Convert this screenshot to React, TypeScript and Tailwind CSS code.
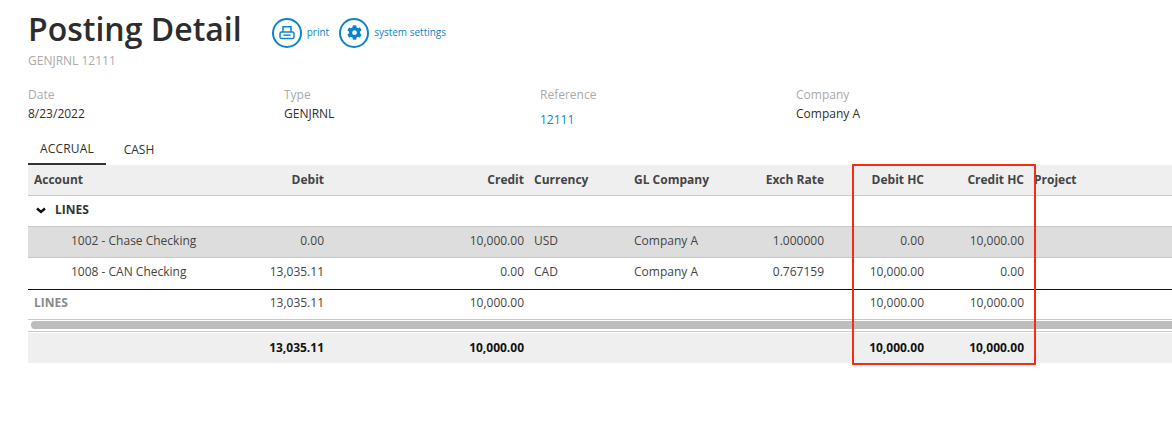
import { FaCog } from 'react-icons/fa'

const gridCols = 'grid grid-cols-[202px_100px_200px_100px_100px_100px_100px_100px_1fr]'

const headers = [
  { label: 'Account', className: 'pl-1.5' },
  { label: 'Debit', className: 'pr-1.5 text-right' },
  { label: 'Credit', className: 'pr-1.5 text-right' },
  { label: 'Currency', className: 'pl-1' },
  { label: 'GL Company', className: 'pl-1' },
  { label: 'Exch Rate', className: 'pr-1.5 text-right' },
  { label: 'Debit HC', className: 'pr-1.5 text-right' },
  { label: 'Credit HC', className: 'pr-1.5 text-right' },
  { label: 'Project', className: 'pl-1' },
]

// values start at the Debit column, the account cell is rendered by each row
function Cells({ values }: { values: string[] }) {
  return (
    <>
      {values.map((value, i) => (
        <div key={i} className={`whitespace-nowrap ${headers[i + 1].className}`}>
          {value}
        </div>
      ))}
    </>
  )
}

function Meta({ label, value, link }: { label: string; value: string; link?: boolean }) {
  return (
    <div className="w-[256px]">
      <div className="text-[12px] leading-[18px] text-[#aaaaaa]">{label}</div>
      <div className={`text-[12px] leading-[18px] ${link ? 'mt-[7px] text-[#0f83c9]' : 'mt-[1px] text-[#2f2f2f]'}`}>
        {value}
      </div>
    </div>
  )
}

export default function App() {
  return (
    <div className="w-[1172px] h-[430px] overflow-hidden bg-white pl-[28px] font-['Open_Sans',sans-serif] text-[12px] text-[#444444]">
      <div className="flex items-center h-[40px] mt-[9px]">
        <h1 className="text-[32px] leading-[40px] font-semibold text-[#2d2d2d]">Posting Detail</h1>
        <div className="flex items-center ml-[30px] mt-[7px] text-[10px] text-[#0f83c9]">
          <span className="flex items-center justify-center w-[30px] h-[30px] rounded-full border-2 border-[#0f83c9]">
            <svg width="16" height="15" viewBox="0 0 16 15" fill="none" stroke="#0f83c9" strokeWidth="1.5">
              <path d="M4 7V1.8h8V7" />
              <rect x="1" y="7" width="14" height="6.5" rx="1.6" />
              <path d="M4.5 10.2h7" />
            </svg>
          </span>
          <span className="ml-[5px]">print</span>
          <span className="flex items-center justify-center w-[30px] h-[30px] rounded-full border-2 border-[#0f83c9] ml-[10px]">
            <FaCog className="w-[15px] h-[15px]" />
          </span>
          <span className="ml-[5px]">system settings</span>
        </div>
      </div>
      <div className="text-[12px] leading-[18px] mt-[3px] text-[#aaaaaa]">GENJRNL 12111</div>

      <div className="flex mt-[16px] h-[41px]">
        <Meta label="Date" value="8/23/2022" />
        <Meta label="Type" value="GENJRNL" />
        <Meta label="Reference" value="12111" link />
        <Meta label="Company" value="Company A" />
      </div>

      <div className="flex mt-[14px] h-[24px] text-[12px] text-[#2f2f2f]">
        <div className="w-[78px] h-[24px] text-center border-b-2 border-[#333333] leading-[16px] tracking-[0.2px]">ACCRUAL</div>
        <div className="w-[66px] text-center leading-[18px]">CASH</div>
      </div>

      <div className="relative w-[1144px]">
        <div className={`${gridCols} items-center h-[31px] bg-[#efefef] border-b border-[#c8c8c8] font-bold text-[#444444]`}>
          {headers.map((h) => (
            <div key={h.label} className={`whitespace-nowrap ${h.className}`}>
              {h.label}
            </div>
          ))}
        </div>

        <div className="flex items-center h-[31px] pl-[8px] pb-[2px] border-b border-[#c8c8c8] font-bold text-[#333333]">
          <svg width="10" height="7" viewBox="0 0 10 7" fill="none" stroke="#111111" strokeWidth="2.4">
            <path d="M1 1.5l4 3.5 4-3.5" />
          </svg>
          <span className="ml-[9px]">LINES</span>
        </div>

        <div className={`${gridCols} items-center h-[31px] pb-[2px] bg-[#dddddd] border-b border-[#c8c8c8]`}>
          <div className="pl-[43px] whitespace-nowrap">1002 - Chase Checking</div>
          <Cells values={['0.00', '10,000.00', 'USD', 'Company A', '1.000000', '0.00', '10,000.00', '']} />
        </div>

        <div className={`${gridCols} items-center h-[32px] pb-[3px] border-b border-[#111111]`}>
          <div className="pl-[43px] whitespace-nowrap">1008 - CAN Checking</div>
          <Cells values={['13,035.11', '0.00', 'CAD', 'Company A', '0.767159', '10,000.00', '0.00', '']} />
        </div>

        <div className={`${gridCols} items-center h-[30px] pb-[4px] border-b border-[#c8c8c8]`}>
          <div className="pl-1.5 font-bold text-[#8a8a8a]">LINES</div>
          <Cells values={['13,035.11', '10,000.00', '', '', '', '10,000.00', '10,000.00', '']} />
        </div>

        <div className="h-[12px] pl-[3px] pt-[1px] border-b border-[#c8c8c8]">
          <div className="h-[8px] rounded-l-full bg-[#bdbdbd]" />
        </div>

        <div className={`${gridCols} items-center h-[30px] mt-[1px] bg-[#efefef] font-bold text-[#111111]`}>
          <div />
          <Cells values={['13,035.11', '10,000.00', '', '', '', '10,000.00', '10,000.00', '']} />
        </div>

        <div className="absolute left-[824px] top-[-1px] w-[184px] h-[201px] border-2 border-[#f72b0e]" />
      </div>
    </div>
  )
}
